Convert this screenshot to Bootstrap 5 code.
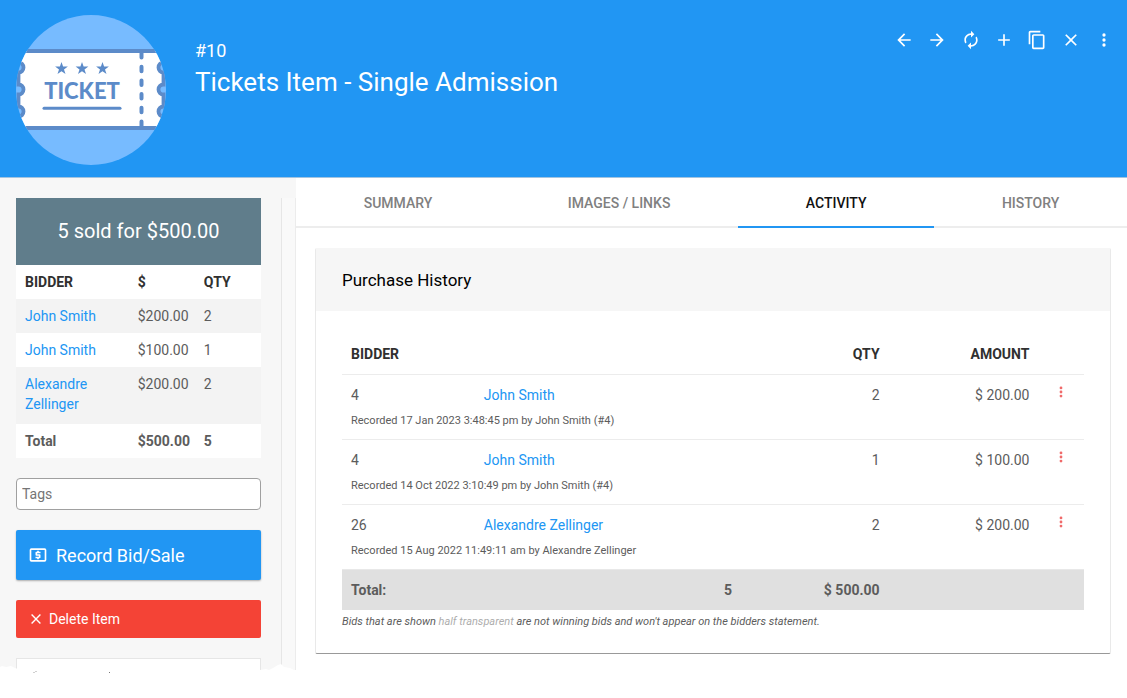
<!DOCTYPE html>
<html lang="en">
<head>
<meta charset="utf-8">
<meta name="viewport" content="width=device-width, initial-scale=1">
<title>Tickets Item - Single Admission</title>
<link href="https://cdn.jsdelivr.net/npm/bootstrap@5.3.0/dist/css/bootstrap.min.css" rel="stylesheet">
<style>
:root{--brand:#2196f3}
body{font-family:Roboto,"Liberation Sans",sans-serif;font-size:14px;line-height:20px;color:#5c5c5c;background:#fff;min-height:100vh}
a{color:var(--brand);text-decoration:none}
button{line-height:20px}
.hero{background:var(--brand);color:#fff;border-bottom:1px solid #a3c4e0;min-height:178px;padding:15px 13px 0 16px}
.avatar{width:150px;height:150px;flex:none}
.hero-titles{margin:25px 0 0 29px}
.item-no{font-size:18px;line-height:22px;margin:0}
.item-name{font-size:26px;line-height:32px;font-weight:400;margin:4px 0 0}
.tool{width:20px;height:20px;color:#fff;background:none;border:0;padding:0;display:block}
.tool svg,.btn svg,.dots svg{display:block;fill:currentColor}
.tools{width:220px;padding-top:15px}
.side{width:296px;flex:none;background:#f7f7f7}
.side-body{padding:20px 20px 0 16px;width:281px}
.rail{width:15px;margin-top:20px;background:#f9f9f9;border-left:1px solid #e6e6e6;border-right:1px solid #ececec}
.sold{background:#607d8b;color:#fff;font-size:20px;line-height:27px;padding:20px 0;text-align:center}
.sales{width:100%;table-layout:fixed;background:#fff;margin:0 0 20px}
.sales th,.sales td{padding:7px 5px 7px 9px;vertical-align:top}
.sales thead th,.history thead th{color:#303030}
.sales tbody tr:nth-child(odd){background:#f3f3f3}
.sales .tall td{padding-bottom:10px}
.tags-box{height:32px;width:100%;border:1px solid #a0a0a0;border-radius:4px;padding:0 5px;background:#fff;display:block;margin-bottom:20px}
.tags-box::placeholder{color:#757575;opacity:1}
.btn-side{border:0;border-radius:2px;color:#fff;width:100%;display:flex;align-items:center;margin-bottom:20px;text-align:left}
.btn-record{background:var(--brand);height:50px;font-size:18px;padding:0 12px;gap:8px;box-shadow:0 1px 2px rgba(0,0,0,.3)}
.btn-delete{background:#f44336;height:38px;font-size:14px;padding:0 13px;gap:6px}
.cut{height:16px;background:#fff;border:1px solid #e6e6e6;border-bottom:0}
.torn{position:absolute;left:0;bottom:0;width:100%;height:12px}
.tabs{border-bottom:2px solid #ededed;display:flex}
.tabs .nav-item{flex:1 1 auto}
.tabs .nav-link{color:#808080;font-weight:500;line-height:20px;padding:15px 0 13px;margin-bottom:-2px;border-bottom:2px solid transparent;text-align:center;width:100%;border-radius:0}
.tabs .nav-link.active{color:#111;border-bottom-color:var(--brand)}
.panel{margin:20px 16px 0 19px;border:1px solid #e9e9e9;border-bottom:1px solid #999;border-top:0;border-radius:2px}
.panel-top{background:#f6f6f6;color:#000;padding:20px 26px 19px;margin:0;font-size:17px;line-height:24px;font-weight:400}
.panel-main{padding:23px 26px 23px}
.history{width:100%;table-layout:fixed;margin:0}
.history th,.history td{padding:10px 10px 0 9px;vertical-align:top}
.history thead th{padding-bottom:10px}
.history .entry td{border-top:1px solid #ececec}
.history .note td{font-size:11px;line-height:16px;padding:8px 10px 10px 9px}
.history .sum td{background:#e0e0e0;padding-bottom:10px;font-weight:700;border-top:1px solid #e8e8e8}
.dots{border:0;background:none;padding:0;color:#f06a6a;display:block;margin:0 0 0 6px}
.hint{font-size:11px;line-height:16px;font-style:italic;margin:4px 0 0}
.faded{opacity:.5}
</style>
</head>
<body>
<header class="hero d-flex align-items-start">
  <svg class="avatar" viewBox="0 0 150 150" role="img" aria-label="Ticket">
    <defs><clipPath id="round"><circle cx="75" cy="75" r="75"/></clipPath></defs>
    <g clip-path="url(#round)">
      <rect width="150" height="150" fill="#77bbff"/>
      <path d="M2.500 36H147.500V47.500A5 5 0 0 0 147.500 57.500V69.500A5 5 0 0 0 147.500 79.500V91.500A5 5 0 0 0 147.500 101.500V113H2.500V101.500A5 5 0 0 0 2.500 91.500V79.500A5 5 0 0 0 2.500 69.500V57.500A5 5 0 0 0 2.500 47.500Z" fill="#fff" stroke="#5c8bc9" stroke-width="3.800"/>
      <path d="M125.500 38V112" stroke="#5c8bc9" stroke-width="4" stroke-linecap="round" stroke-dasharray="4.500 9.200"/>
      <path d="M28 93.300H104" stroke="#5c8bc9" stroke-width="3" stroke-linecap="round"/>
      <g fill="#5c8bc9"><path id="star" d="M45.500 47l1.600 4.600h4.800l-3.900 2.900 1.500 4.600-4-2.800-4 2.800 1.500-4.600-3.900-2.900h4.800z"/><use href="#star" x="20.500"/><use href="#star" x="41"/></g>
      <text x="66" y="84" text-anchor="middle" font-family="Lato, sans-serif" font-weight="900" font-size="22" fill="#5c8bc9">TICKET</text>
    </g>
  </svg>
  <div class="hero-titles flex-grow-1">
    <p class="item-no">#10</p>
    <h1 class="item-name">Tickets Item - Single Admission</h1>
  </div>
  <div class="tools d-flex justify-content-between">
    <button class="tool" aria-label="Previous"><svg width="20" height="20" viewBox="0 0 24 24"><path d="M20 11H7.830l5.590-5.590L12 4l-8 8 8 8 1.410-1.410L7.830 13H20z"/></svg></button>
    <button class="tool" aria-label="Next"><svg width="20" height="20" viewBox="0 0 24 24"><path d="M4 11h12.170l-5.590-5.590L12 4l8 8-8 8-1.410-1.410L16.170 13H4z"/></svg></button>
    <button class="tool" aria-label="Refresh"><svg width="20" height="20" viewBox="0 0 24 24"><path d="M12 6v3l4-4-4-4v3c-4.420 0-8 3.580-8 8 0 1.570.46 3.030 1.240 4.260L6.700 14.800c-.45-.83-.7-1.790-.7-2.800 0-3.310 2.690-6 6-6zm6.760 1.740L17.300 9.200c.44.840.7 1.790.7 2.800 0 3.310-2.690 6-6 6v-3l-4 4 4 4v-3c4.420 0 8-3.580 8-8 0-1.570-.46-3.030-1.240-4.260z"/></svg></button>
    <button class="tool" aria-label="Add"><svg width="20" height="20" viewBox="0 0 24 24"><path d="M19 13h-6v6h-2v-6H5v-2h6V5h2v6h6z"/></svg></button>
    <button class="tool" aria-label="Copy"><svg width="20" height="20" viewBox="1 0 22 24"><path d="M16 1H4c-1.100 0-2 .9-2 2v14h2V3h12V1zm3 4H8c-1.100 0-2 .9-2 2v14c0 1.100.9 2 2 2h11c1.100 0 2-.9 2-2V7c0-1.100-.9-2-2-2zm0 16H8V7h11v14z"/></svg></button>
    <button class="tool" aria-label="Close"><svg width="20" height="20" viewBox="0 0 24 24"><path d="M19 6.410L17.590 5 12 10.590 6.410 5 5 6.410 10.590 12 5 17.590 6.410 19 12 13.410 17.590 19 19 17.590 13.410 12z"/></svg></button>
    <button class="tool" aria-label="More"><svg width="20" height="20" viewBox="0 0 24 24"><circle cx="12" cy="6" r="2"/><circle cx="12" cy="12" r="2"/><circle cx="12" cy="18" r="2"/></svg></button>
  </div>
</header>
<div class="d-flex align-items-start">
  <aside class="side position-relative">
    <div class="d-flex">
      <div class="side-body">
        <div class="sold">5 sold for $500.00</div>
        <table class="sales">
          <colgroup><col style="width:46%"><col style="width:27%"><col style="width:27%"></colgroup>
          <thead><tr><th>BIDDER</th><th>$</th><th>QTY</th></tr></thead>
          <tbody>
            <tr><td><a href="#">John Smith</a></td><td>$200.00</td><td>2</td></tr>
            <tr><td><a href="#">John Smith</a></td><td>$100.00</td><td>1</td></tr>
            <tr class="tall"><td><a href="#">Alexandre Zellinger</a></td><td>$200.00</td><td>2</td></tr>
          </tbody>
          <tfoot><tr><th>Total</th><th>$500.00</th><th>5</th></tr></tfoot>
        </table>
        <input class="tags-box" type="text" placeholder="Tags" aria-label="Tags">
        <button class="btn-side btn btn-record"><svg width="20" height="20" viewBox="0 0 24 24"><path fill-rule="evenodd" d="M4 4H20a2 2 0 0 1 2 2V18a2 2 0 0 1-2 2H4a2 2 0 0 1-2-2V6a2 2 0 0 1 2-2zM4 6V18H20V6zM11 17h2v-1h1c.6 0 1-.4 1-1v-3c0-.6-.4-1-1-1h-3v-1h4V8h-2V7h-2v1h-1c-.6 0-1 .4-1 1v3c0 .6.4 1 1 1h3v1H9v2h2z"/></svg>Record Bid/Sale</button>
        <button class="btn-side btn btn-delete"><svg width="14" height="14" viewBox="2 2 20 20"><path d="M19 6.410L17.590 5 12 10.590 6.410 5 5 6.410 10.590 12 5 17.590 6.410 19 12 13.410 17.590 19 19 17.590 13.410 12z"/></svg>Delete Item</button>
        <div class="cut"></div>
      </div>
      <div class="rail"></div>
    </div>
    <svg class="torn" viewBox="0 0 296 12" preserveAspectRatio="none" aria-hidden="true">
      <path d="M0 5l2-1 4 1 5-1 4 2 6 2H260l6-1 3 1 4-2 5-3 3-1 3 3 6 1 4 2 2 0V12H0z" fill="#fff"/>
      <path d="M33 10h2v1h-2zM35 9h2v1h-2z" fill="#d0d0d0"/>
      <path d="M109 10h1v1h-1z" fill="#777"/>
    </svg>
  </aside>
  <main class="flex-grow-1">
    <ul class="nav tabs">
      <li class="nav-item"><a class="nav-link" href="#">SUMMARY</a></li>
      <li class="nav-item"><a class="nav-link" href="#">IMAGES / LINKS</a></li>
      <li class="nav-item"><a class="nav-link active" aria-current="page" href="#">ACTIVITY</a></li>
      <li class="nav-item"><a class="nav-link" href="#">HISTORY</a></li>
    </ul>
    <section class="panel">
      <h2 class="panel-top">Purchase History</h2>
      <div class="panel-main">
        <table class="history">
          <colgroup><col style="width:17.900%"><col style="width:36%"><col style="width:19.900%"><col style="width:20.200%"><col style="width:6%"></colgroup>
          <thead><tr><th>BIDDER</th><th></th><th class="text-end">QTY</th><th class="text-end">AMOUNT</th><th></th></tr></thead>
          <tbody>
            <tr class="entry"><td>4</td><td><a href="#">John Smith</a></td><td class="text-end">2</td><td class="text-end">$ 200.00</td><td><button class="dots" aria-label="Bid menu"><svg width="14" height="14" viewBox="0 0 24 24"><circle cx="12" cy="5" r="2.400"/><circle cx="12" cy="12" r="2.400"/><circle cx="12" cy="19" r="2.400"/></svg></button></td></tr>
            <tr class="note"><td colspan="5">Recorded 17 Jan 2023 3:48:45 pm by John Smith (#4)</td></tr>
            <tr class="entry"><td>4</td><td><a href="#">John Smith</a></td><td class="text-end">1</td><td class="text-end">$ 100.00</td><td><button class="dots" aria-label="Bid menu"><svg width="14" height="14" viewBox="0 0 24 24"><circle cx="12" cy="5" r="2.400"/><circle cx="12" cy="12" r="2.400"/><circle cx="12" cy="19" r="2.400"/></svg></button></td></tr>
            <tr class="note"><td colspan="5">Recorded 14 Oct 2022 3:10:49 pm by John Smith (#4)</td></tr>
            <tr class="entry"><td>26</td><td><a href="#">Alexandre Zellinger</a></td><td class="text-end">2</td><td class="text-end">$ 200.00</td><td><button class="dots" aria-label="Bid menu"><svg width="14" height="14" viewBox="0 0 24 24"><circle cx="12" cy="5" r="2.400"/><circle cx="12" cy="12" r="2.400"/><circle cx="12" cy="19" r="2.400"/></svg></button></td></tr>
            <tr class="note"><td colspan="5">Recorded 15 Aug 2022 11:49:11 am by Alexandre Zellinger</td></tr>
          </tbody>
          <tfoot><tr class="sum"><td>Total:</td><td class="text-end">5</td><td class="text-end">$ 500.00</td><td></td><td></td></tr></tfoot>
        </table>
        <p class="hint">Bids that are shown <span class="faded">half transparent</span> are not winning bids and won't appear on the bidders statement.</p>
      </div>
    </section>
  </main>
</div>
<script src="https://cdn.jsdelivr.net/npm/bootstrap@5.3.0/dist/js/bootstrap.bundle.min.js"></script>
</body>
</html>
